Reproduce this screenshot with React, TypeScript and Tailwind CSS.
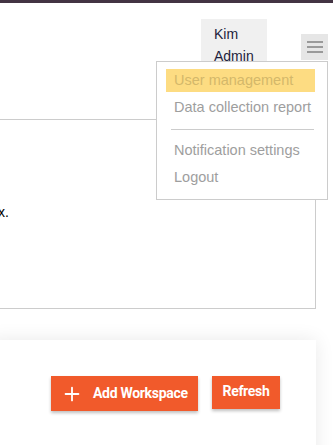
import React from "react";
import { Plus } from "lucide-react";

export default function App() {
  return (
    <div className="relative w-[333px] h-[445px] overflow-hidden bg-white font-['Liberation_Sans',Arial,sans-serif]">
      <div className="h-[3px] bg-[#433443]" />
      <header className="h-[116px] flex justify-end items-start pr-[5px]">
        <div className="mt-[16px] w-[66px] h-[52px] bg-[#f0f0f0] pl-[13px] pt-[4px] text-[14px] leading-[22px] text-[#1e1e3c]">
          <div>Kim</div>
          <div>Admin</div>
        </div>
        <button className="mt-[31px] ml-[34px] w-[27px] h-[26px] bg-[#e6e6e6] flex flex-col items-center justify-center gap-[3px]">
          <span className="block w-[16px] h-[2px] bg-[#9a9a9a]" />
          <span className="block w-[16px] h-[2px] bg-[#9a9a9a]" />
          <span className="block w-[16px] h-[2px] bg-[#9a9a9a]" />
        </button>
      </header>

      <div className="-ml-[10px] w-[326px] h-[190px] border border-[#cccccc] pl-[7px] pt-[82px]">
        <p className="text-[14px] leading-[20px] text-black">x.</p>
      </div>

      <div className="mt-[31px] -ml-[10px] w-[326px] h-[200px] bg-white shadow-[0_0_18px_rgba(0,0,0,0.09)] pl-[61px] pt-[36px]">
        <div className="flex items-start gap-[14px] font-['Roboto',Arial,sans-serif] font-bold text-[14px] tracking-[-0.3px] text-white">
          <button className="h-[35px] w-[147px] bg-[#f15a2b] flex items-center pl-[10px] shadow-[0_2px_3px_rgba(0,0,0,0.25)]">
            <Plus size={22} strokeWidth={2} className="text-white shrink-0" />
            <span className="ml-[10px] whitespace-nowrap">Add Workspace</span>
          </button>
          <button className="h-[33px] w-[68px] bg-[#f15a2b] flex items-center justify-center pb-[2px] shadow-[0_2px_3px_rgba(0,0,0,0.25)]">
            Refresh
          </button>
        </div>
        <div className="mt-[32px] ml-[91px] flex gap-[8px] text-[13px] leading-[16px]">
          <span className="text-[#bbbbbb]">Items per</span>
          <span className="text-[#1a1a5a] font-bold">T</span>
          <span className="text-[#bbbbbb]">otal items</span>
          <span className="text-[#f08080]">0</span>
        </div>
      </div>

      <div className="absolute left-[156px] top-[61px] w-[172px] h-[139px] bg-white border border-[#cccccc] pt-[7px] pl-[9px] pr-[12px] text-[14.5px]">
        <div className="h-[23px] leading-[23px] pl-[8px] bg-[#fddc82] text-[#d4b86a] whitespace-nowrap">User management</div>
        <div className="mt-[4px] h-[23px] leading-[23px] pl-[8px] text-[#9e9e9e] whitespace-nowrap">Data collection report</div>
        <div className="mt-[10px] ml-[5px] mr-[1px] h-px bg-[#cccccc]" />
        <div className="mt-[9px] h-[23px] leading-[23px] pl-[8px] text-[#9e9e9e] whitespace-nowrap">Notification settings</div>
        <div className="mt-[4px] h-[23px] leading-[23px] pl-[8px] text-[#9e9e9e] whitespace-nowrap">Logout</div>
      </div>
    </div>
  );
}
